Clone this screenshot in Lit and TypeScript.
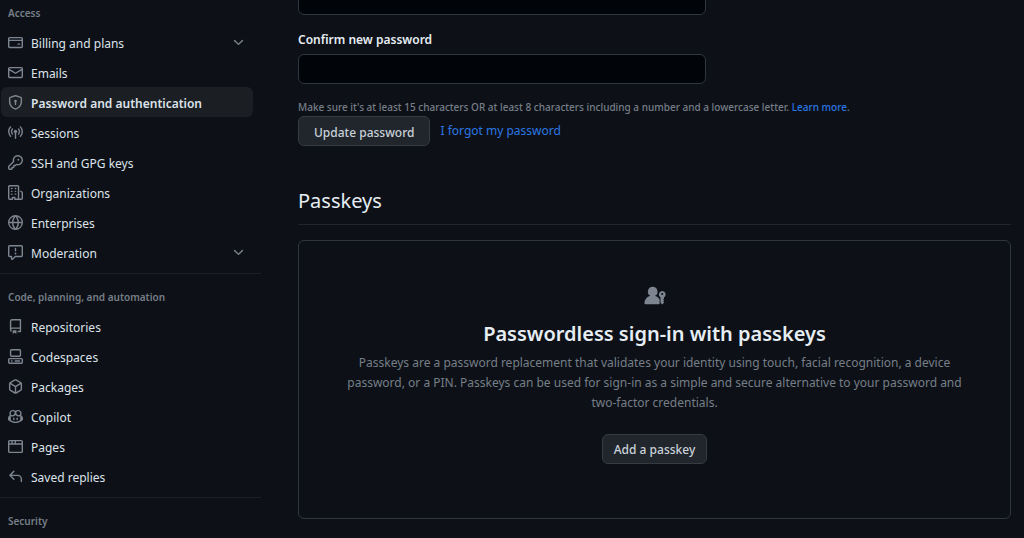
import { LitElement, html, css, svg } from "lit";
import { customElement, property } from "lit/decorators.js";

const ICONS: Record<string, string[]> = {
  card: [
    "M10.75 9a.75.75 0 0 0 0 1.5h1.5a.75.75 0 0 0 0-1.5h-1.5Z",
    "M0 3.75C0 2.784.784 2 1.75 2h12.5c.966 0 1.75.784 1.75 1.75v8.5A1.75 1.75 0 0 1 14.25 14H1.75A1.75 1.75 0 0 1 0 12.25ZM14.5 6.5h-13v5.75c0 .138.112.25.25.25h12.5a.25.25 0 0 0 .25-.25Zm0-2.75a.25.25 0 0 0-.25-.25H1.75a.25.25 0 0 0-.25.25V5h13Z",
  ],
  mail: [
    "M1.75 2h12.5c.966 0 1.75.784 1.75 1.75v8.5A1.75 1.75 0 0 1 14.25 14H1.75A1.75 1.75 0 0 1 0 12.25v-8.5C0 2.784.784 2 1.75 2ZM1.5 12.251c0 .138.112.25.25.25h12.5a.25.25 0 0 0 .25-.25V5.809L8.38 9.397a.75.75 0 0 1-.76 0L1.5 5.809v6.442Zm13-8.181v-.32a.25.25 0 0 0-.25-.25H1.75a.25.25 0 0 0-.25.25v.32L8 7.88Z",
  ],
  shield: [
    "m8.533.133 5.25 1.68A1.75 1.75 0 0 1 15 3.48V7c0 1.566-.32 3.182-1.303 4.682-.983 1.498-2.585 2.813-5.032 3.855a1.697 1.697 0 0 1-1.33 0c-2.447-1.042-4.049-2.357-5.032-3.855C1.32 10.182 1 8.566 1 7V3.48a1.75 1.75 0 0 1 1.217-1.667l5.25-1.68a1.748 1.748 0 0 1 1.066 0Zm-.61 1.429.001.001-5.25 1.68a.251.251 0 0 0-.174.237V7c0 1.36.275 2.666 1.057 3.859.784 1.194 2.121 2.342 4.366 3.298a.196.196 0 0 0 .154 0c2.245-.957 3.582-2.103 4.366-3.297C13.225 9.666 13.5 8.358 13.5 7V3.48a.25.25 0 0 0-.174-.238l-5.25-1.68a.25.25 0 0 0-.153 0ZM9.5 6.5c0 .536-.286 1.032-.75 1.3v2.45a.75.75 0 0 1-1.5 0V7.8A1.5 1.5 0 1 1 9.5 6.5Z",
  ],
  broadcast: [
    "M8.75 8.582v5.668a.75.75 0 0 1-1.5 0V8.582a1.75 1.75 0 1 1 1.5 0Zm3.983-7.125a.75.75 0 0 1 1.06.026A7.976 7.976 0 0 1 16 7c0 2.139-.84 4.083-2.207 5.517a.75.75 0 1 1-1.086-1.034A6.474 6.474 0 0 0 14.5 7a6.474 6.474 0 0 0-1.793-4.483.75.75 0 0 1 .026-1.06Zm-9.466 0c.3.286.312.76.026 1.06A6.474 6.474 0 0 0 1.5 7a6.47 6.47 0 0 0 1.793 4.483.75.75 0 0 1-1.086 1.034A7.973 7.973 0 0 1 0 7c0-2.139.84-4.083 2.207-5.517a.75.75 0 0 1 1.06-.026Zm8.556 2.321A4.988 4.988 0 0 1 13 7a4.988 4.988 0 0 1-1.177 3.222.75.75 0 1 1-1.146-.967A3.487 3.487 0 0 0 11.5 7c0-.86-.309-1.645-.823-2.255a.75.75 0 0 1 1.146-.967Zm-6.492.958A3.48 3.48 0 0 0 4.5 7a3.48 3.48 0 0 0 .823 2.255.75.75 0 0 1-1.146.967A4.981 4.981 0 0 1 3 7a4.982 4.982 0 0 1 1.188-3.236.75.75 0 1 1 1.143.972Z",
  ],
  key: [
    "M10.5 0a5.499 5.499 0 1 1-1.288 10.848l-.932.932a.749.749 0 0 1-.53.22H7v.75a.749.749 0 0 1-.22.53l-.5.5a.749.749 0 0 1-.53.22H5v.75a.749.749 0 0 1-.22.53l-.5.5a.749.749 0 0 1-.53.22h-2A1.75 1.75 0 0 1 0 14.25v-2c0-.199.079-.389.22-.53l4.932-4.932A5.5 5.5 0 0 1 10.5 0Zm-4 5.5c-.001.431.069.86.205 1.269a.75.75 0 0 1-.181.768L1.5 12.56v1.69c0 .138.112.25.25.25h1.69l.06-.06v-1.19a.75.75 0 0 1 .75-.75h1.19l.06-.06v-1.19a.75.75 0 0 1 .75-.75h1.19l1.023-1.025a.75.75 0 0 1 .768-.18A4 4 0 1 0 6.5 5.5ZM11 6a1 1 0 1 1 0-2 1 1 0 0 1 0 2Z",
  ],
  organization: [
    "M1.75 16A1.75 1.75 0 0 1 0 14.25V1.75C0 .784.784 0 1.75 0h8.5C11.216 0 12 .784 12 1.75v12.5c0 .085-.006.168-.018.25h2.268a.25.25 0 0 0 .25-.25V8.285a.25.25 0 0 0-.111-.208l-1.055-.703a.749.749 0 1 1 .832-1.248l1.055.703c.487.325.779.871.779 1.456v5.965A1.75 1.75 0 0 1 14.25 16h-3.5a.766.766 0 0 1-.197-.026c-.099.017-.2.026-.303.026h-3a.75.75 0 0 1-.75-.75V14h-1v1.25a.75.75 0 0 1-.75.75Zm-.25-1.75c0 .138.112.25.25.25H4v-1.25a.75.75 0 0 1 .75-.75h2.5a.75.75 0 0 1 .75.75v1.25h2.25a.25.25 0 0 0 .25-.25V1.75a.25.25 0 0 0-.25-.25h-8.5a.25.25 0 0 0-.25.25ZM3.75 6h.5a.75.75 0 0 1 0 1.5h-.5a.75.75 0 0 1 0-1.5ZM3 3.75A.75.75 0 0 1 3.75 3h.5a.75.75 0 0 1 0 1.5h-.5A.75.75 0 0 1 3 3.75Zm4 3A.75.75 0 0 1 7.75 6h.5a.75.75 0 0 1 0 1.5h-.5A.75.75 0 0 1 7 6.75ZM7.75 3h.5a.75.75 0 0 1 0 1.5h-.5a.75.75 0 0 1 0-1.5ZM3 9.75A.75.75 0 0 1 3.75 9h.5a.75.75 0 0 1 0 1.5h-.5A.75.75 0 0 1 3 9.75ZM7.75 9h.5a.75.75 0 0 1 0 1.5h-.5a.75.75 0 0 1 0-1.5Z",
  ],
  globe: [
    "M8 0a8 8 0 1 1 0 16A8 8 0 0 1 8 0ZM5.78 8.75a9.64 9.64 0 0 0 1.363 4.177c.255.426.542.832.857 1.215.245-.296.551-.705.857-1.215A9.64 9.64 0 0 0 10.22 8.75Zm4.44-1.5a9.64 9.64 0 0 0-1.363-4.177c-.307-.51-.612-.919-.857-1.215a9.927 9.927 0 0 0-.857 1.215A9.64 9.64 0 0 0 5.78 7.25Zm-5.944 1.5H1.543a6.507 6.507 0 0 0 4.666 5.5c-.123-.181-.24-.365-.352-.552-.715-1.192-1.437-2.874-1.581-4.948Zm-2.733-1.5h2.733c.144-2.074.866-3.756 1.58-4.948.12-.197.237-.381.353-.552a6.507 6.507 0 0 0-4.666 5.5Zm10.181 1.5c-.144 2.074-.866 3.756-1.58 4.948-.12.197-.237.381-.353.552a6.507 6.507 0 0 0 4.666-5.5Zm2.733-1.5a6.507 6.507 0 0 0-4.666-5.5c.123.181.24.365.353.552.714 1.192 1.436 2.874 1.58 4.948Z",
  ],
  report: [
    "M0 1.75C0 .784.784 0 1.75 0h12.5C15.216 0 16 .784 16 1.75v9.5A1.75 1.75 0 0 1 14.25 13H8.06l-2.573 2.573A1.458 1.458 0 0 1 3 14.543V13H1.75A1.75 1.75 0 0 1 0 11.25Zm1.75-.25a.25.25 0 0 0-.25.25v9.5c0 .138.112.25.25.25h2a.75.75 0 0 1 .75.75v2.19l2.72-2.72a.749.749 0 0 1 .53-.22h6.5a.25.25 0 0 0 .25-.25v-9.5a.25.25 0 0 0-.25-.25Zm7 2.25v2.5a.75.75 0 0 1-1.5 0v-2.5a.75.75 0 0 1 1.5 0ZM9 9a1 1 0 1 1-2 0 1 1 0 0 1 2 0Z",
  ],
  repo: [
    "M2 2.5A2.5 2.5 0 0 1 4.5 0h8.75a.75.75 0 0 1 .75.75v12.5a.75.75 0 0 1-.75.75h-2.5a.75.75 0 0 1 0-1.5h1.75v-2h-8a1 1 0 0 0-.714 1.7.75.75 0 1 1-1.072 1.05A2.495 2.495 0 0 1 2 11.5Zm10.5-1h-8a1 1 0 0 0-1 1v6.708A2.486 2.486 0 0 1 4.5 9h8ZM5 12.25a.25.25 0 0 1 .25-.25h3.5a.25.25 0 0 1 .25.25v3.25a.25.25 0 0 1-.4.2l-1.45-1.087a.249.249 0 0 0-.3 0L5.4 15.7a.25.25 0 0 1-.4-.2Z",
  ],
  codespaces: [
    "M0 11.25c0-.966.784-1.75 1.75-1.75h12.5c.966 0 1.75.784 1.75 1.75v3A1.75 1.75 0 0 1 14.25 16H1.75A1.75 1.75 0 0 1 0 14.25Zm2-9.5C2 .784 2.784 0 3.75 0h8.5C13.216 0 14 .784 14 1.75v5a1.75 1.75 0 0 1-1.75 1.75h-8.5A1.75 1.75 0 0 1 2 6.75Zm1.75-.25a.25.25 0 0 0-.25.25v5c0 .138.112.25.25.25h8.5a.25.25 0 0 0 .25-.25v-5a.25.25 0 0 0-.25-.25Zm-2 9.5a.25.25 0 0 0-.25.25v3c0 .138.112.25.25.25h12.5a.25.25 0 0 0 .25-.25v-3a.25.25 0 0 0-.25-.25Z",
    "M7 12.75a.75.75 0 0 1 .75-.75h4.5a.75.75 0 0 1 0 1.5h-4.5a.75.75 0 0 1-.75-.75Zm-4 0a.75.75 0 0 1 .75-.75h.5a.75.75 0 0 1 0 1.5h-.5a.75.75 0 0 1-.75-.75Z",
  ],
  package: [
    "m8.878.392 5.25 3.045c.54.314.872.89.872 1.514v6.098a1.75 1.75 0 0 1-.872 1.514l-5.25 3.045a1.75 1.75 0 0 1-1.756 0l-5.25-3.045A1.75 1.75 0 0 1 1 11.049V4.951c0-.624.332-1.201.872-1.514L7.122.392a1.75 1.75 0 0 1 1.756 0ZM7.875 1.69l-4.63 2.685L8 7.133l4.755-2.758-4.63-2.685a.248.248 0 0 0-.25 0ZM2.5 5.677v5.372c0 .09.047.171.125.216l4.625 2.683V8.432Zm6.25 8.271 4.625-2.683a.25.25 0 0 0 .125-.216V5.677L8.75 8.432Z",
  ],
  copilot: [
    "M7.998 15.035c-4.562 0-7.873-2.914-7.998-3.749V9.338c.085-.628.677-1.686 1.588-2.065.013-.07.024-.143.036-.218.029-.183.06-.384.126-.612-.201-.508-.254-1.084-.254-1.656 0-.87.128-1.769.693-2.484.579-.733 1.494-1.124 2.724-1.261 1.206-.134 2.262.034 2.944.765.05.053.096.108.139.165.044-.057.094-.112.143-.165.682-.731 1.738-.899 2.944-.765 1.23.137 2.145.528 2.724 1.261.566.715.693 1.614.693 2.484 0 .572-.053 1.148-.254 1.656.066.228.098.429.126.612.012.076.024.148.037.218.924.385 1.522 1.471 1.591 2.095v1.872c0 .766-3.351 3.795-8.002 3.795Zm0-1.485c2.28 0 4.584-1.11 5.002-1.433V7.862l-.023-.116c-.49.21-1.075.291-1.727.291-1.146 0-2.059-.327-2.71-.991A3.222 3.222 0 0 1 8 6.303a3.24 3.24 0 0 1-.544.743c-.65.664-1.563.991-2.71.991-.652 0-1.236-.081-1.727-.291l-.023.116v4.255c.419.323 2.722 1.433 5.002 1.433ZM6.762 2.83c-.193-.206-.637-.413-1.682-.297-1.019.113-1.479.404-1.713.7-.247.312-.369.789-.369 1.554 0 .793.129 1.171.308 1.371.162.181.519.379 1.442.379.853 0 1.339-.235 1.638-.54.315-.322.527-.827.617-1.553.117-.935-.037-1.395-.241-1.614Zm4.155-.297c-1.044-.116-1.488.091-1.681.297-.204.219-.359.679-.242 1.614.091.726.303 1.231.618 1.553.299.305.784.54 1.638.54.922 0 1.28-.198 1.442-.379.179-.2.308-.578.308-1.371 0-.765-.123-1.242-.37-1.554-.233-.296-.693-.587-1.713-.7Z",
    "M6.25 9.037a.75.75 0 0 1 .75.75v1.501a.75.75 0 0 1-1.5 0V9.787a.75.75 0 0 1 .75-.75Zm4.25.75v1.501a.75.75 0 0 1-1.5 0V9.787a.75.75 0 0 1 1.5 0Z",
  ],
  browser: [
    "M0 2.75C0 1.784.784 1 1.75 1h12.5c.966 0 1.75.784 1.75 1.75v10.5A1.75 1.75 0 0 1 14.25 15H1.75A1.75 1.75 0 0 1 0 13.25ZM14.5 6h-13v7.25c0 .138.112.25.25.25h12.5a.25.25 0 0 0 .25-.25Zm-6-3.5v2h6V2.75a.25.25 0 0 0-.25-.25ZM5 2.5v2h2v-2Zm-3.25 0a.25.25 0 0 0-.25.25V4.5h2v-2Z",
  ],
  reply: [
    "M6.78 1.97a.75.75 0 0 1 0 1.06L3.81 6h6.44A4.75 4.75 0 0 1 15 10.75v2.5a.75.75 0 0 1-1.5 0v-2.5a3.25 3.25 0 0 0-3.25-3.25H3.81l2.97 2.97a.749.749 0 0 1-.326 1.275.749.749 0 0 1-.734-.215L1.47 7.28a.75.75 0 0 1 0-1.06l4.25-4.25a.75.75 0 0 1 1.06 0Z",
  ],
  chevron: [
    "M12.78 5.22a.749.749 0 0 1 0 1.06l-4.25 4.25a.749.749 0 0 1-1.06 0L3.22 6.28a.749.749 0 1 1 1.06-1.06L8 8.939l3.72-3.719a.749.749 0 0 1 1.06 0Z",
  ],
  passkey: [
    "M9.496 2a5.25 5.25 0 0 0-2.519 9.857A9.006 9.006 0 0 0 .5 20.228a.751.751 0 0 0 .728.772h5.257c3.338.001 6.677.002 10.015 0a.5.5 0 0 0 .5-.5v-4.669a.95.95 0 0 0-.171-.551 9.02 9.02 0 0 0-4.814-3.423A5.25 5.25 0 0 0 9.496 2Z",
    "M23.625 10.313c0 1.31-.672 2.464-1.691 3.134a.398.398 0 0 0-.184.33v.886a.372.372 0 0 1-.11.265l-.534.534a.188.188 0 0 0 0 .265l.534.534c.071.07.11.166.11.265v.347a.374.374 0 0 1-.11.265l-.534.534a.188.188 0 0 0 0 .265l.534.534a.37.37 0 0 1 .11.265v.431a.379.379 0 0 1-.097.253l-1.2 1.319a.781.781 0 0 1-1.156 0l-1.2-1.319a.379.379 0 0 1-.097-.253v-5.39a.398.398 0 0 0-.184-.33 3.75 3.75 0 1 1 5.809-3.134ZM21 9.75a1.125 1.125 0 1 0-2.25 0 1.125 1.125 0 0 0 2.25 0Z",
  ],
};

@customElement("app-icon")
class AppIcon extends LitElement {
  @property() name = "";
  @property({ type: Number }) box = 16;

  static styles = css`
    :host {
      display: block;
      flex: none;
      width: 15px;
      height: 15px;
    }
    .glyph {
      display: block;
      width: 100%;
      height: 100%;
      fill: currentColor;
    }
  `;

  render() {
    return html`<svg class="glyph" viewBox="0 0 ${this.box} ${this.box}" aria-hidden="true">
      ${(ICONS[this.name] ?? []).map((d) => svg`<path fill-rule="evenodd" d=${d}></path>`)}
    </svg>`;
  }
}

interface NavItem {
  label: string;
  icon: string;
  current?: boolean;
  expandable?: boolean;
}

interface NavGroup {
  title: string;
  items: NavItem[];
}

const GROUPS: NavGroup[] = [
  {
    title: "Access",
    items: [
      { label: "Billing and plans", icon: "card", expandable: true },
      { label: "Emails", icon: "mail" },
      { label: "Password and authentication", icon: "shield", current: true },
      { label: "Sessions", icon: "broadcast" },
      { label: "SSH and GPG keys", icon: "key" },
      { label: "Organizations", icon: "organization" },
      { label: "Enterprises", icon: "globe" },
      { label: "Moderation", icon: "report", expandable: true },
    ],
  },
  {
    title: "Code, planning, and automation",
    items: [
      { label: "Repositories", icon: "repo" },
      { label: "Codespaces", icon: "codespaces" },
      { label: "Packages", icon: "package" },
      { label: "Copilot", icon: "copilot" },
      { label: "Pages", icon: "browser" },
      { label: "Saved replies", icon: "reply" },
    ],
  },
  { title: "Security", items: [] },
];

@customElement("settings-nav")
class SettingsNav extends LitElement {
  static styles = css`
    :host {
      display: block;
    }
    .group {
      padding: 11px 0 6px;
      border-bottom: 1px solid #1c2128;
    }
    .group:first-child {
      padding-top: 1px;
    }
    .group:last-child {
      border-bottom: 0;
    }
    .title {
      margin: 0 0 2px;
      padding-left: 8px;
      font-size: 10px;
      font-weight: 600;
      line-height: 24px;
      color: #767e88;
    }
    .list {
      margin: 0;
      padding: 0 8px 0 1px;
      list-style: none;
    }
    .item {
      display: flex;
      align-items: center;
      gap: 8px;
      box-sizing: border-box;
      width: 100%;
      height: 30px;
      padding: 0 7px;
      border: 0;
      border-radius: 6px;
      background: none;
      color: #dde3ea;
      font: inherit;
      text-align: left;
      text-decoration: none;
    }
    .item.current {
      background: #1b1f24;
      font-weight: 600;
    }
    .label {
      flex: 1;
      padding-top: 3px;
    }
    .icon {
      color: #7d8590;
    }
  `;

  private renderItem(item: NavItem) {
    const content = html`
      <app-icon class="icon" name=${item.icon}></app-icon>
      <span class="label">${item.label}</span>
      ${item.expandable ? html`<app-icon class="icon" name="chevron"></app-icon>` : ""}
    `;
    return html`<li>
      ${item.expandable
        ? html`<button class="item" type="button" aria-expanded="false">${content}</button>`
        : html`<a class="item ${item.current ? "current" : ""}" href="#">${content}</a>`}
    </li>`;
  }

  render() {
    return html`<nav aria-label="Settings">
      ${GROUPS.map(
        (group) => html`<section class="group">
          <h3 class="title">${group.title}</h3>
          <ul class="list">
            ${group.items.map((item) => this.renderItem(item))}
          </ul>
        </section>`
      )}
    </nav>`;
  }
}

@customElement("app-root")
class AppRoot extends LitElement {
  static styles = css`
    :host {
      display: grid;
      grid-template-columns: 261px minmax(0, 1fr);
      column-gap: 37px;
      box-sizing: border-box;
      height: 100vh;
      overflow: hidden;
      padding-right: 13px;
      background: #0d1117;
      color: #e6edf3;
      font-family: "Noto Sans", sans-serif;
      font-size: 12px;
      line-height: 20px;
    }
    .form {
      display: flex;
      flex-direction: column;
      align-items: flex-start;
      margin-top: -15px;
    }
    .field {
      box-sizing: border-box;
      width: 408px;
      max-width: 100%;
      height: 30px;
      padding: 4px 11px;
      border: 1px solid #30363d;
      border-radius: 6px;
      background: #010409;
      color: #e6edf3;
      font: inherit;
    }
    .field-label {
      margin: 15px 0 4px;
      font-weight: 600;
    }
    .note {
      margin: 14px 0 0;
      font-size: 10px;
      font-weight: 500;
      line-height: 18px;
      color: #767e88;
    }
    .link {
      color: #2b76e3;
      text-decoration: none;
    }
    .actions {
      display: flex;
      gap: 10px;
      line-height: 30px;
    }
    .button {
      height: 30px;
      padding: 1px 15px 0;
      border: 1px solid #363b42;
      border-radius: 6px;
      background: #21262d;
      color: #c9d1d9;
      font: inherit;
      font-weight: 500;
    }
    .button.compact {
      padding: 1px 11px 0;
    }
    .heading {
      margin: 39px 0 15px;
      padding-bottom: 8px;
      border-bottom: 1px solid #21262d;
      font-size: 20px;
      font-weight: 400;
      line-height: 31px;
    }
    .card {
      display: flex;
      flex-direction: column;
      align-items: center;
      padding: 44px 30px 54px;
      border: 1px solid #30363d;
      border-radius: 6px;
      text-align: center;
    }
    .card-icon {
      width: 22px;
      height: 22px;
      color: #7d8590;
    }
    .card-title {
      margin: 11px 0 3px;
      font-size: 20px;
      font-weight: 600;
      line-height: 32px;
    }
    .card-text {
      max-width: 640px;
      margin: 0 0 21px;
      color: #767e88;
    }
  `;

  render() {
    return html`
      <settings-nav></settings-nav>
      <main>
        <form class="form">
          <input class="field" type="password" aria-label="New password" />
          <label class="field-label" for="confirm">Confirm new password</label>
          <input class="field" id="confirm" type="password" />
          <p class="note">
            Make sure it's at least 15 characters OR at least 8 characters including a number and a lowercase letter.
            <a class="link" href="#">Learn more</a>.
          </p>
          <div class="actions">
            <button class="button" type="button">Update password</button>
            <a class="link" href="#">I forgot my password</a>
          </div>
        </form>
        <h2 class="heading">Passkeys</h2>
        <section class="card">
          <app-icon class="card-icon" name="passkey" box="24"></app-icon>
          <h3 class="card-title">Passwordless sign-in with passkeys</h3>
          <p class="card-text">
            Passkeys are a password replacement that validates your identity using touch, facial recognition, a device
            password, or a PIN. Passkeys can be used for sign-in as a simple and secure alternative to your password and
            two-factor credentials.
          </p>
          <button class="button compact" type="button">Add a passkey</button>
        </section>
      </main>
    `;
  }
}
